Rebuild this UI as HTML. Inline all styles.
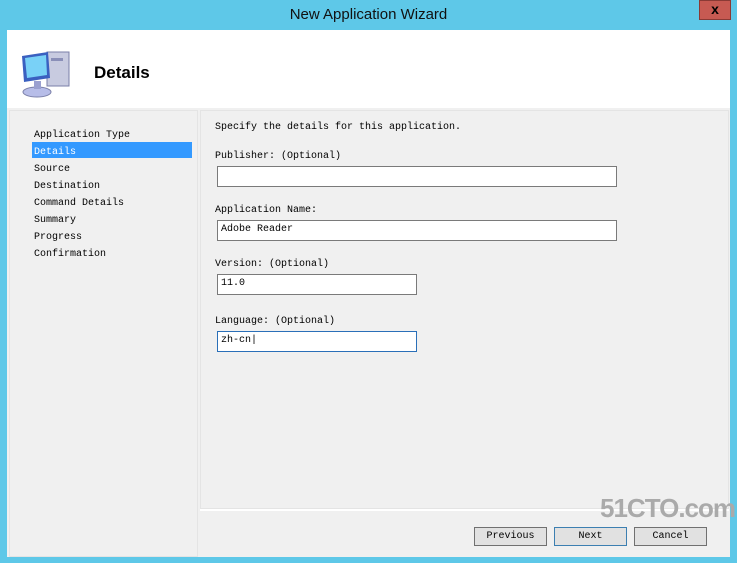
<!DOCTYPE html>
<html><head><style>
*{margin:0;padding:0;box-sizing:border-box}
body{width:737px;height:563px;background:#5ec8e8;position:relative;overflow:hidden;font-family:"Liberation Mono","Noto Serif CJK SC",monospace;font-size:10px;color:#000}
.a{position:absolute}
.t{white-space:pre}
.inp{position:absolute;background:#fff;border:1px solid #7a7a7a;height:21px;padding:3px 0 0 3px}
.btn{position:absolute;top:527px;width:73px;height:19px;background:#e1e1e1;border:1px solid #707070;text-align:center;line-height:17px}
</style></head><body>
<div class="a" style="left:0;top:6px;width:737px;text-align:center;font-family:'Liberation Sans',sans-serif;font-size:15px;color:#111">New Application Wizard</div>
<div class="a" style="left:699px;top:0;width:32px;height:20px;background:#c75a52;border:1px solid #8a3a35;color:#000;font:bold 14px 'Liberation Sans',sans-serif;text-align:center;line-height:17px">x</div>
<div class="a" style="left:7px;top:30px;width:723px;height:527px;background:#f0f0f0"></div>
<div class="a" style="left:7px;top:30px;width:723px;height:78px;background:#fff"></div>
<svg class="a" style="left:20px;top:48px" width="52" height="52" viewBox="0 0 52 52">
<rect x="27" y="4" width="22" height="34" fill="#c8cbe0" stroke="#7a7fa8"/>
<rect x="31" y="10" width="12" height="3" fill="#8a8fb8"/>
<ellipse cx="17" cy="44" rx="14" ry="5" fill="#b7bde8" stroke="#7a7fa8"/>
<rect x="14" y="33" width="7" height="8" fill="#9aa0d0"/>
<polygon points="2,8 28,4 30,30 4,34" fill="#3a60c0"/>
<polygon points="5,10 26,7 27,27 7,30" fill="#79d1f7"/>
</svg>
<div class="a" style="left:94px;top:63px;font:bold 17px 'Liberation Sans',sans-serif;color:#000">Details</div>
<div class="a" style="left:9px;top:110px;width:189px;height:447px;background:#f0f0f0;border:1px solid #e4e4e4"></div>
<div class="a" style="left:200px;top:110px;width:529px;height:399px;background:#f0f0f0;border:1px solid #e4e4e4"></div>
<div class="a" style="left:200px;top:509px;width:529px;height:2px;background:#fff"></div>
<div class="a" style="left:32px;top:142px;width:160px;height:16px;background:#3399ff"></div>
<div class="a t" style="left:34px;top:127px;line-height:17px">Application Type
<span style="color:#fff">Details</span>
Source
Destination
Command Details
Summary
Progress
Confirmation</div>
<div class="a t" style="left:215px;top:122px">Specify the details for this application.</div>
<div class="a t" style="left:215px;top:151px">Publisher: (Optional)</div>
<div class="inp" style="left:217px;top:166px;width:400px"></div>
<div class="a t" style="left:215px;top:205px">Application Name:</div>
<div class="inp" style="left:217px;top:220px;width:400px">Adobe Reader</div>
<div class="a t" style="left:215px;top:259px">Version: (Optional)</div>
<div class="inp" style="left:217px;top:274px;width:200px">11.0</div>
<div class="a t" style="left:215px;top:316px">Language: (Optional)</div>
<div class="inp" style="left:217px;top:331px;width:200px;border-color:#2a6fb8">zh-cn|</div>
<div class="btn" style="left:474px">Previous</div>
<div class="btn" style="left:554px;border-color:#3c7fb1">Next</div>
<div class="btn" style="left:634px">Cancel</div>
<div class="a" style="left:600px;top:493px;font:bold 26px 'Liberation Sans',sans-serif;color:#aaa;letter-spacing:-1px">51CTO.com</div>
</body></html>
